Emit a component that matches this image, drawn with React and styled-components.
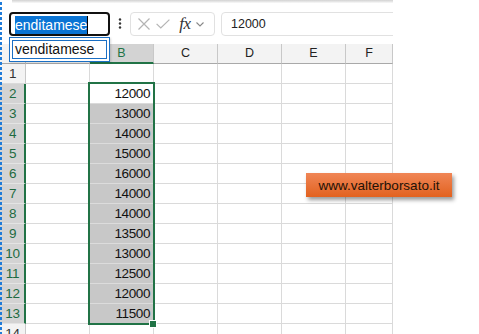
import React from "react";
import styled, { createGlobalStyle } from "styled-components";

const Global = createGlobalStyle`
  html, body { margin: 0; padding: 0; background: #ffffff; }
  body { font-family: "Liberation Sans", Arial, sans-serif; }
`;

const GREEN = "#217346";

const Page = styled.div`
  position: relative;
  width: 479px;
  height: 334px;
  overflow: hidden;
  background: #ffffff;
`;

const Sheet = styled.div`
  position: relative;
  width: 393px;
  height: 334px;
  display: flex;
  flex-direction: column;
  & > * { flex: none; }
  &::before {
    content: "";
    position: absolute;
    left: 0;
    top: 2px;
    bottom: 0;
    width: 2px;
    background: repeating-linear-gradient(to bottom, #1f7bd8 0 3px, transparent 3px 5px);
    z-index: 8;
  }
`;

const TopShadow = styled.div`
  height: 3px;
  margin-left: 12px;
  background: linear-gradient(#d2d2d2, #e9e9e9 60%, #fafafa);
`;

const Toolbar = styled.div`
  height: 41px;
  box-sizing: border-box;
  padding: 9px 0 0 9px;
  display: flex;
  align-items: flex-start;
  position: relative;
  z-index: 4;
`;

const NameBoxWrap = styled.div`
  position: relative;
  width: 101px;
  height: 24px;
  flex: none;
`;

const NameBox = styled.div`
  box-sizing: border-box;
  width: 101px;
  height: 24px;
  border: 2px solid #111;
  border-radius: 4px;
  padding: 1px 0 0 4px;
  display: flex;
  align-items: center;
  background: #fff;
  font-size: 14px;
`;

const Selected = styled.span`
  background: #0a74d4;
  color: #fff;
  line-height: 18px;
  height: 18px;
`;

const Caret = styled.span`
  width: 1px;
  height: 18px;
  background: #000;
`;

const Suggest = styled.div`
  position: absolute;
  left: 0;
  top: 25px;
  width: 101px;
  height: 25px;
  box-sizing: border-box;
  border: 1px solid #1a6fc4;
  padding: 2px;
  background: #fff;
  box-shadow: 1px 1px 2px rgba(0, 0, 0, 0.15);
  z-index: 6;
`;

const SuggestItem = styled.div`
  box-sizing: border-box;
  height: 19px;
  border: 1px solid #1a6fc4;
  padding-left: 2px;
  font-size: 14px;
  line-height: 17px;
  color: #111;
`;

const Dots = styled.div`
  width: 20px;
  height: 24px;
  flex: none;
  display: flex;
  align-items: center;
  justify-content: center;
`;

const FxButtons = styled.div`
  box-sizing: border-box;
  width: 85px;
  height: 24px;
  flex: none;
  border: 1px solid #e1e1e1;
  border-radius: 4px;
  display: flex;
  align-items: center;
  padding-left: 6px;
  background: #fff;
`;

const IconSlot = styled.div`
  width: ${(p) => p.$w}px;
  height: 22px;
  display: flex;
  align-items: center;
  justify-content: center;
  flex: none;
`;

const FxText = styled.span`
  font-family: "Liberation Serif", "Times New Roman", serif;
  font-style: italic;
  font-size: 17px;
  color: #333;
  line-height: 22px;
  letter-spacing: -0.5px;
`;

const FormulaClip = styled.div`
  flex: 1;
  min-width: 0;
  height: 24px;
  margin-left: 6px;
  overflow: hidden;
`;

const FormulaInput = styled.div`
  box-sizing: border-box;
  width: 200px;
  height: 24px;
  border: 1px solid #e1e1e1;
  border-radius: 4px;
  padding-left: 9px;
  display: flex;
  align-items: center;
  font-size: 12.5px;
  color: #222;
  background: #fff;
`;

const Grid = styled.div`
  position: relative;
  display: grid;
  grid-template-columns: 26px repeat(5, 64px) 47px;
  grid-auto-rows: 20px;
`;

const Corner = styled.div`
  box-sizing: border-box;
  background: #f3f3f3;
  border-right: 1px solid #c6c6c6;
  border-bottom: 1px solid #a9a9a9;
`;

const ColHeader = styled.div`
  box-sizing: border-box;
  background: ${(p) => (p.$sel ? "#d3d3d3" : "#f3f3f3")};
  color: ${(p) => (p.$sel ? GREEN : "#222")};
  border-right: 1px solid #c8c8c8;
  border-bottom: ${(p) => (p.$sel ? `2px solid ${GREEN}` : "1px solid #a9a9a9")};
  font-size: 12.5px;
  text-align: center;
  line-height: 19px;
`;

const RowHeader = styled.div`
  box-sizing: border-box;
  background: ${(p) => (p.$sel ? "#d3d3d3" : "#f3f3f3")};
  color: ${(p) => (p.$sel ? "#1e6b41" : "#333")};
  border-right: ${(p) => (p.$sel ? `2px solid ${GREEN}` : "1px solid #c8c8c8")};
  border-bottom: 1px solid ${(p) => (p.$sel ? "#e4e4e4" : "#dadada")};
  font-size: 13.5px;
  letter-spacing: -0.3px;
  text-align: center;
  line-height: 20px;
  padding-left: ${(p) => (p.$sel ? "1px" : "0")};
`;

const Cell = styled.div`
  box-sizing: border-box;
  background: ${(p) => (p.$shade ? "#c8c8c8" : "#ffffff")};
  border-right: 1px solid #dadada;
  border-bottom: 1px solid ${(p) => (p.$shade ? "#dcdcdc" : "#dadada")};
  font-size: 13.5px;
  letter-spacing: -0.4px;
  color: #111;
  text-align: right;
  padding-right: 3px;
  line-height: 20px;
`;

const SelectionBox = styled.div`
  position: absolute;
  left: 88px;
  top: 38px;
  width: 67px;
  height: 243px;
  box-sizing: border-box;
  border: 2px solid ${GREEN};
  pointer-events: none;
`;

const FillHandle = styled.div`
  position: absolute;
  right: -4px;
  bottom: -5px;
  width: 6px;
  height: 6px;
  background: ${GREEN};
  border: 1px solid #fff;
`;

const Shape = styled.div`
  position: absolute;
  left: 306px;
  top: 173px;
  width: 146px;
  height: 24px;
  background: linear-gradient(#f08656, #e2621f);
  box-shadow: 2px 3px 4px rgba(0, 0, 0, 0.4);
  color: #231208;
  font-size: 13.5px;
  display: flex;
  align-items: center;
  justify-content: center;
  z-index: 7;
`;

const values = {
  2: 12000, 3: 13000, 4: 14000, 5: 15000, 6: 16000, 7: 14000,
  8: 14000, 9: 13500, 10: 13000, 11: 12500, 12: 12000, 13: 11500,
};

const cols = ["A", "B", "C", "D", "E", "F"];
const rows = Array.from({ length: 14 }, (_, i) => i + 1);

export default function App() {
  return (
    <Page>
      <Global />
      <Sheet>
        <TopShadow />
        <Toolbar>
          <NameBoxWrap>
            <NameBox>
              <Selected>enditamese</Selected>
              <Caret />
            </NameBox>
            <Suggest>
              <SuggestItem>venditamese</SuggestItem>
            </Suggest>
          </NameBoxWrap>
          <Dots>
            <svg width="4" height="14" viewBox="0 0 4 14">
              <circle cx="2" cy="2.5" r="1.2" fill="#333" />
              <circle cx="2" cy="6.5" r="1.2" fill="#333" />
              <circle cx="2" cy="10.5" r="1.2" fill="#333" />
            </svg>
          </Dots>
          <FxButtons>
            <IconSlot $w={14}>
              <svg width="12" height="12" viewBox="0 0 12 12">
                <path d="M0.5 0.5 L11.5 11.5 M11.5 0.5 L0.5 11.5" stroke="#b4b4b4" strokeWidth="1.2" fill="none" />
              </svg>
            </IconSlot>
            <IconSlot $w={24}>
              <svg width="14" height="10" viewBox="0 0 14 10">
                <path d="M0.6 4.8 L4.8 9 L13.4 0.6" stroke="#b4b4b4" strokeWidth="1.2" fill="none" />
              </svg>
            </IconSlot>
            <IconSlot $w={20}>
              <FxText>fx</FxText>
            </IconSlot>
            <IconSlot $w={10}>
              <svg width="8" height="5" viewBox="0 0 8 5">
                <path d="M0.5 0.5 L4 4 L7.5 0.5" stroke="#888" strokeWidth="1.1" fill="none" />
              </svg>
            </IconSlot>
          </FxButtons>
          <FormulaClip>
            <FormulaInput>12000</FormulaInput>
          </FormulaClip>
        </Toolbar>
        <Grid>
          <Corner />
          {cols.map((c) => (
            <ColHeader key={c} $sel={c === "B"}>{c}</ColHeader>
          ))}
          {rows.map((r) => {
            const sel = r >= 2 && r <= 13;
            return (
              <React.Fragment key={r}>
                <RowHeader $sel={sel}>{r}</RowHeader>
                {cols.map((c) => (
                  <Cell key={c} $shade={c === "B" && r >= 3 && r <= 13}>
                    {c === "B" && values[r] ? values[r] : ""}
                  </Cell>
                ))}
              </React.Fragment>
            );
          })}
          <SelectionBox>
            <FillHandle />
          </SelectionBox>
        </Grid>
      </Sheet>
      <Shape>www.valterborsato.it</Shape>
    </Page>
  );
}
